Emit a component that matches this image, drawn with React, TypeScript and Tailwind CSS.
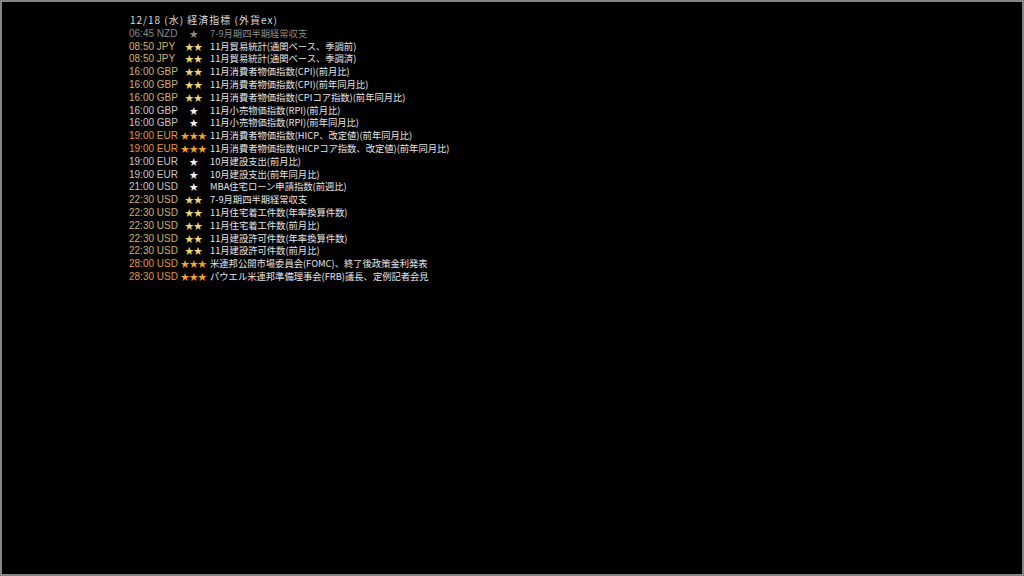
const rows: { t: string; s: number; text: string; dim?: boolean }[] = [
  { t: "06:45 NZD", s: 1, text: "7-9月期四半期経常収支", dim: true },
  { t: "08:50 JPY", s: 2, text: "11月貿易統計(通関ベース、季調前)" },
  { t: "08:50 JPY", s: 2, text: "11月貿易統計(通関ベース、季調済)" },
  { t: "16:00 GBP", s: 2, text: "11月消費者物価指数(CPI)(前月比)" },
  { t: "16:00 GBP", s: 2, text: "11月消費者物価指数(CPI)(前年同月比)" },
  { t: "16:00 GBP", s: 2, text: "11月消費者物価指数(CPIコア指数)(前年同月比)" },
  { t: "16:00 GBP", s: 1, text: "11月小売物価指数(RPI)(前月比)" },
  { t: "16:00 GBP", s: 1, text: "11月小売物価指数(RPI)(前年同月比)" },
  { t: "19:00 EUR", s: 3, text: "11月消費者物価指数(HICP、改定値)(前年同月比)" },
  { t: "19:00 EUR", s: 3, text: "11月消費者物価指数(HICPコア指数、改定値)(前年同月比)" },
  { t: "19:00 EUR", s: 1, text: "10月建設支出(前月比)" },
  { t: "19:00 EUR", s: 1, text: "10月建設支出(前年同月比)" },
  { t: "21:00 USD", s: 1, text: "MBA住宅ローン申請指数(前週比)" },
  { t: "22:30 USD", s: 2, text: "7-9月期四半期経常収支" },
  { t: "22:30 USD", s: 2, text: "11月住宅着工件数(年率換算件数)" },
  { t: "22:30 USD", s: 2, text: "11月住宅着工件数(前月比)" },
  { t: "22:30 USD", s: 2, text: "11月建設許可件数(年率換算件数)" },
  { t: "22:30 USD", s: 2, text: "11月建設許可件数(前月比)" },
  { t: "28:00 USD", s: 3, text: "米連邦公開市場委員会(FOMC)、終了後政策金利発表" },
  { t: "28:30 USD", s: 3, text: "パウエル米連邦準備理事会(FRB)議長、定例記者会見" },
];

function timeColor(s: number, dim?: boolean) {
  if (dim) return "text-[#8a8a8a]";
  if (s === 3) return "text-[#e09a2a]";
  if (s === 2) return "text-[#cdb468]";
  return "text-[#c8c8c8]";
}

function starColor(s: number, dim?: boolean) {
  if (dim) return "text-[#8a8a8a]";
  if (s === 3) return "text-[#f5a01e]";
  if (s === 2) return "text-[#f0d868]";
  return "text-[#f0f0f0]";
}

export default function App() {
  return (
    <div className="h-[576px] w-[1024px] overflow-hidden bg-black border-2 border-[#858585]">
      <div
        className="pt-[12px] pl-[127px] text-[10px] leading-[12.8px] text-[#e6e6e6]"
        style={{ fontFamily: '"Noto Sans CJK JP", "Liberation Sans", sans-serif' }}
      >
        <div className="h-[12.8px] pl-[1px] tracking-[1px] text-[#dcdcdc]">12/18 (水) 経済指標 (外貨ex)</div>
        {rows.map((r, i) => (
          <div key={i} className="flex h-[12.8px] items-baseline whitespace-nowrap">
            <span className={`w-[51px] font-['Liberation_Sans',sans-serif] ${timeColor(r.s, r.dim)}`}>{r.t}</span>
            <span className={`w-[27px] text-center text-[9px] tracking-[-0.3px] ${starColor(r.s, r.dim)}`}>
              {"★".repeat(r.s)}
            </span>
            <span className={`pl-[3px] text-[9.3px] ${r.dim ? "text-[#8a8a8a]" : "text-[#e6e6e6]"}`}>{r.text}</span>
          </div>
        ))}
      </div>
    </div>
  );
}
